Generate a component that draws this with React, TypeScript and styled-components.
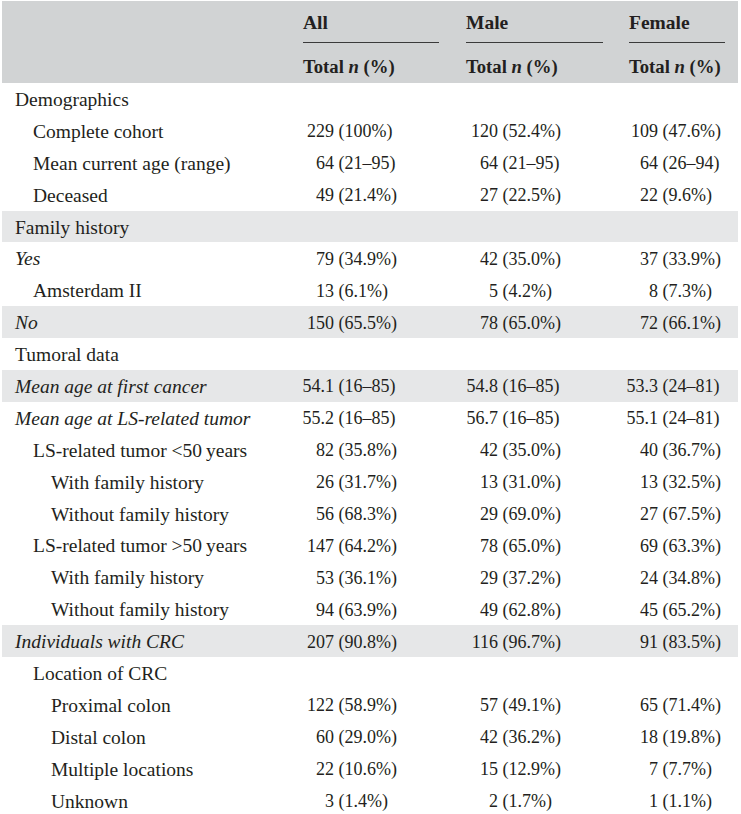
import React from "react";
import styled, { createGlobalStyle } from "styled-components";

const Global = createGlobalStyle`
  html, body { margin: 0; padding: 0; background: #ffffff; }
  body { font-family: "Liberation Serif", "Times New Roman", serif; color: #231f20; }
`;

const Table = styled.div`
  margin: 1px 0 0 2px;
  width: 736px;
`;

const Head = styled.div`
  background: #d1d3d4;
  height: 82px;
  display: grid;
  grid-template-columns: 301px 163px 163px 1fr;
  grid-template-rows: 42px 40px;
`;

const GroupCell = styled.div<{ $w: number }>`
  width: ${(p) => p.$w}px;
  box-sizing: border-box;
  border-bottom: 1.5px solid #3a3a3a;
  display: flex;
  align-items: center;
  padding-top: 2px;
  font-size: 19.5px;
  font-weight: 700;
`;

const SubCell = styled.div`
  display: flex;
  align-items: center;
  padding-top: 8px;
  font-size: 18.7px;
  font-weight: 700;
  white-space: nowrap;
  & i { font-style: italic; }
`;

const Row = styled.div<{ $shade?: boolean }>`
  display: grid;
  grid-template-columns: 301px 163px 163px 1fr;
  height: 31.9px;
  align-items: center;
  background: ${(p) => (p.$shade ? "#e6e7e8" : "transparent")};
`;

const Label = styled.div<{ $level: number; $italic?: boolean }>`
  padding-left: ${(p) => 13 + p.$level * 18}px;
  padding-top: 2px;
  font-size: 19.5px;
  font-style: ${(p) => (p.$italic ? "italic" : "normal")};
  white-space: nowrap;
`;

const Value = styled.div`
  display: flex;
  align-items: baseline;
  padding-top: 2px;
  font-size: 18px;
  white-space: nowrap;
`;

const Count = styled.span<{ $w: number }>`
  width: ${(p) => p.$w}px;
  display: flex;
  justify-content: flex-end;
  flex: none;
`;

const Rest = styled.span`
  margin-left: 4.5px;
`;

type RowData = {
  label: string;
  level: number;
  italic?: boolean;
  shade?: boolean;
  v?: [string, string, string];
};

const rows: RowData[] = [
  { label: "Demographics", level: 0 },
  { label: "Complete cohort", level: 1, v: ["229 (100%)", "120 (52.4%)", "109 (47.6%)"] },
  { label: "Mean current age (range)", level: 1, v: ["64 (21–95)", "64 (21–95)", "64 (26–94)"] },
  { label: "Deceased", level: 1, v: ["49 (21.4%)", "27 (22.5%)", "22 (9.6%)"] },
  { label: "Family history", level: 0, shade: true },
  { label: "Yes", level: 0, italic: true, v: ["79 (34.9%)", "42 (35.0%)", "37 (33.9%)"] },
  { label: "Amsterdam II", level: 1, v: ["13 (6.1%)", "5 (4.2%)", "8 (7.3%)"] },
  { label: "No", level: 0, italic: true, shade: true, v: ["150 (65.5%)", "78 (65.0%)", "72 (66.1%)"] },
  { label: "Tumoral data", level: 0 },
  { label: "Mean age at first cancer", level: 0, italic: true, shade: true, v: ["54.1 (16–85)", "54.8 (16–85)", "53.3 (24–81)"] },
  { label: "Mean age at LS-related tumor", level: 0, italic: true, v: ["55.2 (16–85)", "56.7 (16–85)", "55.1 (24–81)"] },
  { label: "LS-related tumor <50\u2009years", level: 1, v: ["82 (35.8%)", "42 (35.0%)", "40 (36.7%)"] },
  { label: "With family history", level: 2, v: ["26 (31.7%)", "13 (31.0%)", "13 (32.5%)"] },
  { label: "Without family history", level: 2, v: ["56 (68.3%)", "29 (69.0%)", "27 (67.5%)"] },
  { label: "LS-related tumor >50\u2009years", level: 1, v: ["147 (64.2%)", "78 (65.0%)", "69 (63.3%)"] },
  { label: "With family history", level: 2, v: ["53 (36.1%)", "29 (37.2%)", "24 (34.8%)"] },
  { label: "Without family history", level: 2, v: ["94 (63.9%)", "49 (62.8%)", "45 (65.2%)"] },
  { label: "Individuals with CRC", level: 0, italic: true, shade: true, v: ["207 (90.8%)", "116 (96.7%)", "91 (83.5%)"] },
  { label: "Location of CRC", level: 1 },
  { label: "Proximal colon", level: 2, v: ["122 (58.9%)", "57 (49.1%)", "65 (71.4%)"] },
  { label: "Distal colon", level: 2, v: ["60 (29.0%)", "42 (36.2%)", "18 (19.8%)"] },
  { label: "Multiple locations", level: 2, v: ["22 (10.6%)", "15 (12.9%)", "7 (7.7%)"] },
  { label: "Unknown", level: 2, v: ["3 (1.4%)", "2 (1.7%)", "1 (1.1%)"] },
];

const countWidths = [31, 32, 29];

function Cell({ text, col }: { text: string; col: number }) {
  const i = text.indexOf(" ");
  return (
    <Value>
      <Count $w={countWidths[col]}>{text.slice(0, i)}</Count>
      <Rest>{text.slice(i + 1)}</Rest>
    </Value>
  );
}

const groups: [string, number][] = [
  ["All", 136],
  ["Male", 137],
  ["Female", 96],
];

export default function App() {
  return (
    <>
      <Global />
      <Table>
        <Head>
          <div />
          {groups.map(([g, w]) => (
            <GroupCell key={g} $w={w}>
              {g}
            </GroupCell>
          ))}
          <div />
          {groups.map(([g]) => (
            <SubCell key={g}>
              Total&nbsp;<i>n</i>&nbsp;(%)
            </SubCell>
          ))}
        </Head>
        {rows.map((r, idx) => (
          <Row key={idx} $shade={r.shade}>
            <Label $level={r.level} $italic={r.italic}>
              {r.label}
            </Label>
            {r.v ? r.v.map((t, c) => <Cell key={c} text={t} col={c} />) : null}
          </Row>
        ))}
      </Table>
    </>
  );
}
